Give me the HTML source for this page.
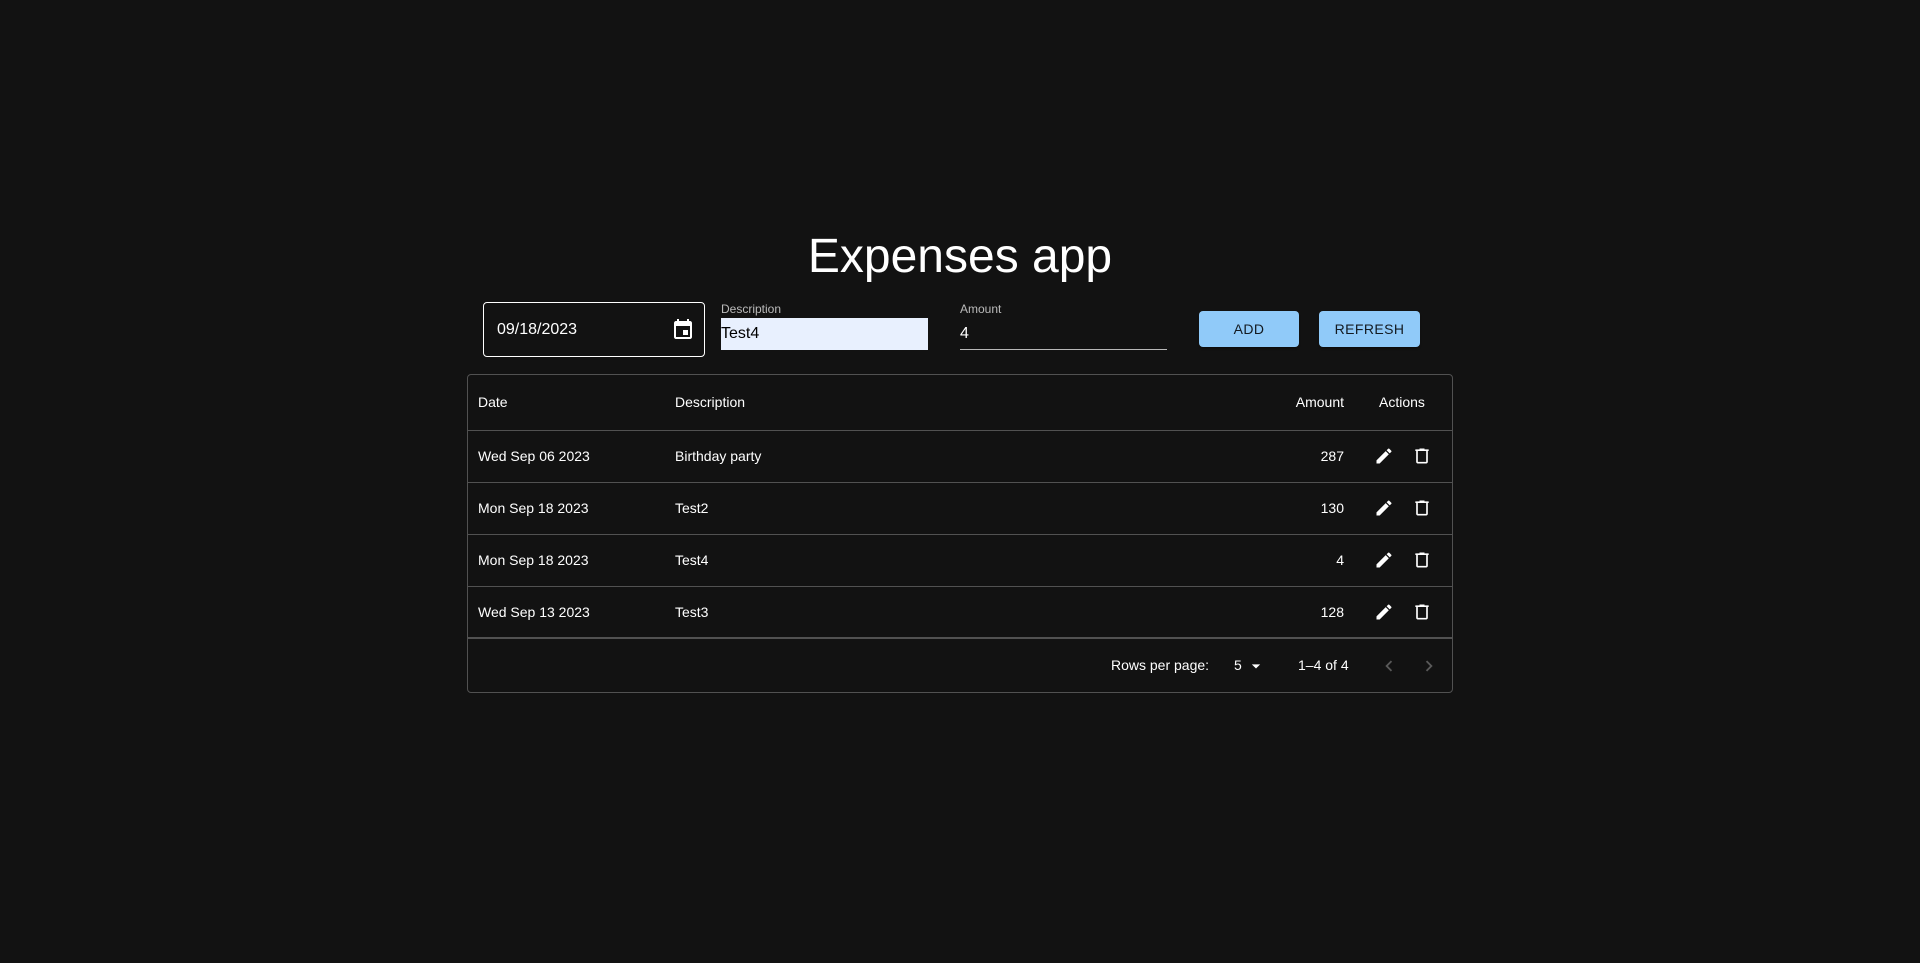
<!DOCTYPE html>
<html><head><meta charset="utf-8"><style>
*{box-sizing:border-box;margin:0;padding:0}
body{width:1920px;height:963px;background:#121212;color:#fff;font-family:"Liberation Sans",Arial,sans-serif;position:relative;overflow:hidden}
.a{position:absolute}
h1{position:absolute;left:0;width:1920px;top:225px;text-align:center;font-weight:400;font-size:48px;line-height:64px}
.date{left:483px;top:302px;width:222px;height:55px;border:1px solid #fff;border-radius:4px}
.date span{position:absolute;left:13px;top:18px;font-size:16px}
.lbl{font-size:12px;color:rgba(255,255,255,.7)}
.btn{background:#90caf9;color:rgba(0,0,0,.87);border-radius:4px;font-size:14px;letter-spacing:.4px;display:flex;align-items:center;justify-content:center;height:36px;top:311px;box-shadow:0 3px 1px -2px rgba(0,0,0,.2),0 2px 2px 0 rgba(0,0,0,.14)}
.tbl{left:467px;top:374px;width:986px;height:319px;border:1px solid #515151;border-radius:4px}
.row{position:absolute;left:0;width:984px;border-bottom:1px solid #515151;font-size:14px}
.row .c{position:absolute;top:0;line-height:inherit}
svg{fill:#fff}
</style></head><body>
<h1>Expenses app</h1>
<div class="a date"><span>09/18/2023</span>
<svg class="a" style="left:187px;top:15px" width="24" height="24" viewBox="0 0 24 24"><path d="M17 12h-5v5h5v-5zM16 1v2H8V1H6v2H5c-1.11 0-1.99.9-1.99 2L3 19c0 1.1.89 2 2 2h14c1.1 0 2-.9 2-2V5c0-1.1-.9-2-2-2h-1V1h-2zm3 18H5V8h14v11z"/></svg></div>
<div class="a lbl" style="left:721px;top:302px">Description</div>
<div class="a" style="left:721px;top:318px;width:207px;height:32px;background:#e8f0fe;color:#000;font-size:16px;line-height:32px">Test4</div>
<div class="a lbl" style="left:960px;top:302px">Amount</div>
<div class="a" style="left:960px;top:318px;width:207px;height:32px;border-bottom:1px solid rgba(255,255,255,.7);font-size:16px;line-height:32px">4</div>
<div class="a btn" style="left:1199px;width:100px">ADD</div>
<div class="a btn" style="left:1319px;width:101px">REFRESH</div>
<div class="a tbl">
<div class="row" style="top:0;height:56px;line-height:55px"><span class="c" style="left:10px">Date</span><span class="c" style="left:207px">Description</span><span class="c" style="right:108px">Amount</span><span class="c" style="left:911px">Actions</span></div>
<div class="row" style="top:56px;height:52px;line-height:51px"><span class="c" style="left:10px">Wed Sep 06 2023</span><span class="c" style="left:207px">Birthday party</span><span class="c" style="right:108px">287</span></div>
<div class="row" style="top:108px;height:52px;line-height:51px"><span class="c" style="left:10px">Mon Sep 18 2023</span><span class="c" style="left:207px">Test2</span><span class="c" style="right:108px">130</span></div>
<div class="row" style="top:160px;height:52px;line-height:51px"><span class="c" style="left:10px">Mon Sep 18 2023</span><span class="c" style="left:207px">Test4</span><span class="c" style="right:108px">4</span></div>
<div class="row" style="top:212px;height:52px;line-height:51px;border-bottom:2px solid #515151"><span class="c" style="left:10px">Wed Sep 13 2023</span><span class="c" style="left:207px">Test3</span><span class="c" style="right:108px">128</span></div>
<div class="a" style="top:264px;left:0;width:984px;height:53px;font-size:14px;line-height:53px">
<span class="a" style="left:643px">Rows per page:</span><span class="a" style="left:766px">5</span>
<svg class="a" style="left:778px;top:17px" width="20" height="20" viewBox="0 0 24 24"><path d="M7 10l5 5 5-5z"/></svg>
<span class="a" style="left:830px">1–4 of 4</span>
<svg class="a" style="left:910px;top:16px;fill:rgba(255,255,255,.3)" width="22" height="22" viewBox="0 0 24 24"><path d="M15.41 7.41 14 6l-6 6 6 6 1.41-1.41L10.83 12z"/></svg>
<svg class="a" style="left:950px;top:16px;fill:rgba(255,255,255,.3)" width="22" height="22" viewBox="0 0 24 24"><path d="M10 6 8.59 7.41 13.17 12l-4.58 4.59L10 18l6-6z"/></svg>
</div>
</div>
<svg class="a" style="left:1374px;top:446px" width="20" height="20" viewBox="0 0 24 24"><path d="M3 17.25V21h3.75L17.81 9.94l-3.75-3.75L3 17.25zM20.71 7.04a.996.996 0 0 0 0-1.41l-2.34-2.34a.996.996 0 0 0-1.41 0l-1.83 1.83 3.75 3.75 1.83-1.83z"/></svg>
<svg class="a" style="left:1412px;top:446px" width="20" height="20" viewBox="0 0 24 24"><path d="M15 4V3H9v1H4v2h1v13c0 1.1.9 2 2 2h10c1.1 0 2-.9 2-2V6h1V4h-5zm2 15H7V6h10v13z"/></svg>
<svg class="a" style="left:1374px;top:498px" width="20" height="20" viewBox="0 0 24 24"><path d="M3 17.25V21h3.75L17.81 9.94l-3.75-3.75L3 17.25zM20.71 7.04a.996.996 0 0 0 0-1.41l-2.34-2.34a.996.996 0 0 0-1.41 0l-1.83 1.83 3.75 3.75 1.83-1.83z"/></svg>
<svg class="a" style="left:1412px;top:498px" width="20" height="20" viewBox="0 0 24 24"><path d="M15 4V3H9v1H4v2h1v13c0 1.1.9 2 2 2h10c1.1 0 2-.9 2-2V6h1V4h-5zm2 15H7V6h10v13z"/></svg>
<svg class="a" style="left:1374px;top:550px" width="20" height="20" viewBox="0 0 24 24"><path d="M3 17.25V21h3.75L17.81 9.94l-3.75-3.75L3 17.25zM20.71 7.04a.996.996 0 0 0 0-1.41l-2.34-2.34a.996.996 0 0 0-1.41 0l-1.83 1.83 3.75 3.75 1.83-1.83z"/></svg>
<svg class="a" style="left:1412px;top:550px" width="20" height="20" viewBox="0 0 24 24"><path d="M15 4V3H9v1H4v2h1v13c0 1.1.9 2 2 2h10c1.1 0 2-.9 2-2V6h1V4h-5zm2 15H7V6h10v13z"/></svg>
<svg class="a" style="left:1374px;top:602px" width="20" height="20" viewBox="0 0 24 24"><path d="M3 17.25V21h3.75L17.81 9.94l-3.75-3.75L3 17.25zM20.71 7.04a.996.996 0 0 0 0-1.41l-2.34-2.34a.996.996 0 0 0-1.41 0l-1.83 1.83 3.75 3.75 1.83-1.83z"/></svg>
<svg class="a" style="left:1412px;top:602px" width="20" height="20" viewBox="0 0 24 24"><path d="M15 4V3H9v1H4v2h1v13c0 1.1.9 2 2 2h10c1.1 0 2-.9 2-2V6h1V4h-5zm2 15H7V6h10v13z"/></svg>
</body></html>
